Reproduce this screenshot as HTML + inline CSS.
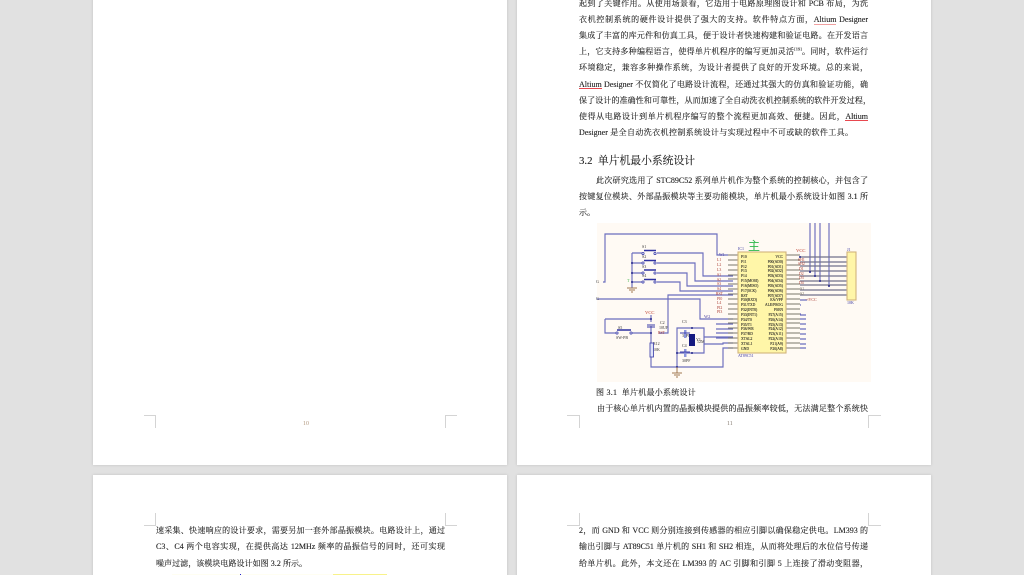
<!DOCTYPE html>
<html lang="zh"><head><meta charset="utf-8"><title>文档</title>
<style>
html,body{margin:0;padding:0;width:1024px;height:575px;overflow:hidden;background:#e1e1e1}
.pg{position:absolute;background:#fff;box-shadow:0 0 3px rgba(0,0,0,.14)}
#all{position:absolute;left:0;top:0;width:1024px;height:575px;overflow:hidden;font-family:"Liberation Serif","Noto Serif CJK SC",serif;color:#1f1f1f;filter:blur(.3px)}
.l{position:absolute;font-size:8px;line-height:12px;height:12px;white-space:nowrap;text-align:justify;text-align-last:justify;-webkit-text-stroke:.12px #1f1f1f}
.r{left:579px;width:289px}
.q{left:156px;width:289px}
.u{background:linear-gradient(#e8484f,#e8484f) 0 100%/100% 1px no-repeat;padding-bottom:.5px}
.w{background:linear-gradient(#f0a0a0,#f0a0a0) 0 100%/100% 1px no-repeat;padding-bottom:.5px}
.m{position:absolute;background:#d4d4d4}
.n{position:absolute;font-size:6px;line-height:8px;color:#8a7f75}
sup{font-size:4.5px;line-height:0}
svg{position:absolute;left:0;top:0}
svg text{font-family:"Liberation Serif",serif}
</style></head><body>
<div id="all">
<div class="pg" style="left:93px;top:-10px;width:414px;height:475px"></div>
<div class="pg" style="left:517px;top:-10px;width:414px;height:475px"></div>
<div class="pg" style="left:93px;top:475px;width:414px;height:120px"></div>
<div class="pg" style="left:517px;top:475px;width:414px;height:120px"></div>

<div class="m" style="left:144px;top:415px;width:12px;height:1px"></div><div class="m" style="left:155px;top:415px;width:1px;height:13px"></div>
<div class="m" style="left:445px;top:415px;width:12px;height:1px"></div><div class="m" style="left:445px;top:415px;width:1px;height:13px"></div>
<div class="m" style="left:567px;top:415px;width:12px;height:1px"></div><div class="m" style="left:579px;top:415px;width:1px;height:13px"></div>
<div class="m" style="left:868px;top:415px;width:13px;height:1px"></div><div class="m" style="left:868px;top:415px;width:1px;height:13px"></div>
<div class="m" style="left:144px;top:525px;width:12px;height:1px"></div><div class="m" style="left:155px;top:513px;width:1px;height:13px"></div>
<div class="m" style="left:445px;top:525px;width:12px;height:1px"></div><div class="m" style="left:445px;top:513px;width:1px;height:13px"></div>
<div class="m" style="left:567px;top:525px;width:12px;height:1px"></div><div class="m" style="left:579px;top:513px;width:1px;height:13px"></div>
<div class="m" style="left:868px;top:525px;width:13px;height:1px"></div><div class="m" style="left:868px;top:513px;width:1px;height:13px"></div>
<div class="n" style="left:303px;top:420px;color:#b39a80">10</div>
<div class="n" style="left:727px;top:420px">11</div>

<div class="l r" style="top:-2px">起到了关键作用。从使用场景看，它适用于电路原理图设计和 PCB 布局，为洗</div>
<div class="l r" style="top:14px">衣机控制系统的硬件设计提供了强大的支持。软件特点方面，<span class="w">Altium</span> Designer</div>
<div class="l r" style="top:30px">集成了丰富的库元件和仿真工具，便于设计者快速构建和验证电路。在开发语言</div>
<div class="l r" style="top:46px">上，它支持多种编程语言，使得单片机程序的编写更加灵活<sup>[19]</sup>。同时，软件运行</div>
<div class="l r" style="top:62px">环境稳定，兼容多种操作系统，为设计者提供了良好的开发环境。总的来说，</div>
<div class="l r" style="top:78.500px"><span class="u">Altium</span> Designer 不仅简化了电路设计流程，还通过其强大的仿真和验证功能，确</div>
<div class="l r" style="top:94.500px;width:292px">保了设计的准确性和可靠性，从而加速了全自动洗衣机控制系统的软件开发过程，</div>
<div class="l r" style="top:110.500px">使得从电路设计到单片机程序编写的整个流程更加高效、便捷。因此，<span class="u">Altium</span></div>
<div class="l r" style="top:126.500px;width:274px">Designer 是全自动洗衣机控制系统设计与实现过程中不可或缺的软件工具。</div>
<div class="l" style="left:579px;top:153.500px;font-size:10.800px;line-height:14px;height:14px;text-align:left;text-align-last:left">3.2&nbsp; 单片机最小系统设计</div>
<div class="l" style="left:596px;width:272px;top:174.500px">此次研究选用了 STC89C52 系列单片机作为整个系统的控制核心，并包含了</div>
<div class="l r" style="top:191px">按键复位模块、外部晶振模块等主要功能模块，单片机最小系统设计如图 3.1 所</div>
<div class="l" style="left:579px;top:207px;text-align-last:left">示。</div>
<div class="l" style="left:596px;top:386.500px;text-align-last:left;letter-spacing:.25px">图 3.1&nbsp; 单片机最小系统设计</div>
<div class="l" style="left:597px;width:271px;top:403px">由于核心单片机内置的晶振模块提供的晶振频率较低，无法满足整个系统快</div>

<div class="l q" style="top:524.500px">速采集、快速响应的设计要求，需要另加一套外部晶振模块。电路设计上，通过</div>
<div class="l q" style="top:541px">C3、C4 两个电容实现，在提供高达 12MHz 频率的晶振信号的同时，还可实现</div>
<div class="l" style="left:156px;top:557.500px;text-align-last:left;letter-spacing:.05px">噪声过滤，该模块电路设计如图 3.2 所示。</div>
<div class="l r" style="top:524.500px">2，而 GND 和 VCC 则分别连接到传感器的相应引脚以确保稳定供电。LM393 的</div>
<div class="l r" style="top:541px">输出引脚与 AT89C51 单片机的 SH1 和 SH2 相连，从而将处理后的水位信号传递</div>
<div class="l r" style="top:557.500px">给单片机。此外，本文还在 LM393 的 AC 引脚和引脚 5 上连接了滑动变阻器，</div>

<svg width="1024" height="575" viewBox="0 0 1024 575">
<rect x="172" y="574" width="172" height="1" fill="#fffef2"/>
<rect x="240" y="574" width="1" height="1" fill="#22c"/>
<rect x="333" y="574" width="54" height="1" fill="#f8f28a"/>

<rect x="597" y="223" width="274" height="159" fill="#fffaf4"/>
<text x="748" y="250" font-size="12" fill="#2fb84a" style="font-family:'Noto Sans CJK SC',sans-serif">主</text>

<g fill="none" stroke="#6a6dbe" stroke-width="1.150">
<path d="M603 282H605V234H717V255H728"/>
<path d="M597 299H700V319H733"/>
<path d="M632 253H642M632 263H642M632 273H642M632 282H642M632 253V288"/>
<path d="M657 253H703V276H733M657 263H695V281H733M657 273H687V286H733M657 282H680V291H733"/>
<path d="M659 333H668V295H733"/>
<path d="M651 315V322M651 326V343M651 357V367H723V348H733"/>
<path d="M605 319H651M605 319V333H617M631 333H651"/>
<path d="M677 328H704V353H677ZM677 328V367"/>
<path d="M704 337H733M704 344H723V343H733"/>
<path d="M716 324H733M716 329H733M716 333H733M716 338H733"/>
<path d="M810 223V272M815 223V276M820 223V281M829 223V286"/>
<path d="M800 257H847M800 262H847M800 266H847M800 271H847M800 276H847M800 281H847M800 285H847M800 290H847M800 295H847" stroke="#72728a"/>
<path d="M800 300H807M800 305H801M800 314H801"/>
<path d="M800 315H806M800 319H806M800 324H806M800 329H806M800 334H806M800 339H806M800 344H806M800 348H806"/>
</g>

<g stroke="#78766a" stroke-width="1">
<path d="M728 255H738M728 260H738M728 265H738M728 270H738M728 275H738M728 279H738M728 284H738M728 289H738M728 294H738M728 299H738M728 304H738M728 309H738M728 314H738M728 319H738M728 323H738M728 328H738M728 333H738M728 338H738M728 343H738M728 348H738"/>
<path d="M786 255H800M786 260H800M786 265H800M786 270H800M786 275H800M786 279H800M786 284H800M786 289H800M786 294H800M786 299H800M786 304H800M786 309H800M786 314H800M786 319H800M786 323H800M786 328H800M786 333H800M786 338H800M786 343H800M786 348H800"/>
</g>
<rect x="738" y="252" width="48" height="101" fill="#fff6a8" stroke="#d2b47c" stroke-width="1.100"/>
<rect x="847" y="252" width="9" height="48" fill="#fff6a8" stroke="#d2b47c" stroke-width="1.100"/>

<g font-size="3.700" fill="#222" stroke="#222" stroke-width=".08">
<text x="741" y="258">P10</text><text x="741" y="263">P11</text><text x="741" y="268">P12</text><text x="741" y="272">P13</text><text x="741" y="277">P14</text>
<text x="741" y="282">P15(MOSI)</text><text x="741" y="287">P16(MISO)</text><text x="741" y="292">P17(SCK)</text><text x="741" y="297">RST</text><text x="741" y="301">P30(RXD)</text>
<text x="741" y="306">P31/TXD</text><text x="741" y="311">P32(INT0)</text><text x="741" y="316">P33(INT1)</text><text x="741" y="321">P34/T0</text><text x="741" y="326">P35/T1</text>
<text x="741" y="330">P36/WR</text><text x="741" y="335">P37/RD</text><text x="741" y="340">XTAL2</text><text x="741" y="345">XTAL1</text><text x="741" y="350">GND</text>
<g text-anchor="end">
<text x="783" y="258">VCC</text><text x="783" y="263">P00(AD0)</text><text x="783" y="268">P01(AD1)</text><text x="783" y="272">P02(AD2)</text><text x="783" y="277">P03(AD3)</text>
<text x="783" y="282">P04(AD4)</text><text x="783" y="287">P05(AD5)</text><text x="783" y="292">P06(AD6)</text><text x="783" y="297">P07(AD7)</text><text x="783" y="301">EA/VPP</text>
<text x="783" y="306">ALE/PROG</text><text x="783" y="311">PSEN</text><text x="783" y="316">P27(A15)</text><text x="783" y="321">P26(A14)</text><text x="783" y="326">P25(A13)</text>
<text x="783" y="330">P24(A12)</text><text x="783" y="335">P23(A11)</text><text x="783" y="340">P22(A10)</text><text x="783" y="345">P21(A9)</text><text x="783" y="350">P20(A8)</text>
</g>
</g>

<g font-size="3.800" fill="#a83a30">
<text x="719" y="256" fill="#4a40a0">W1</text><text x="717" y="261">L1</text><text x="717" y="266">L2</text><text x="717" y="271">L3</text>
<text x="717" y="276">S1</text><text x="717" y="281">S2</text><text x="717" y="285">S3</text><text x="717" y="290">S4</text><text x="716" y="295">RST</text>
<text x="717" y="300">PI0</text><text x="717" y="304">L4</text><text x="717" y="309">PI2</text><text x="717" y="313">PI3</text>
<text x="704" y="318" font-size="4.400" fill="#4a40a0">W2</text>
<text x="798" y="261">SH1</text><text x="798" y="265">SH2</text><text x="799" y="270">D1</text><text x="799" y="275">D2</text><text x="799" y="279">D3</text><text x="799" y="284">D4</text>
<text x="800" y="290" fill="#6a6050">S1</text><text x="800" y="295" fill="#6a6050">S2</text>
<text x="796" y="252" font-size="4.600" fill="#b83020">VCC</text>
<text x="645" y="314" font-size="4.600" fill="#b83020">VCC</text>
<text x="658" y="334">RST</text>
</g>
<g font-size="4" fill="#333">
<text x="738" y="250" fill="#3a38a0">IC1</text>
<text x="738" y="357" fill="#3a38a0">AT89C51</text>
<text x="847" y="251" fill="#3a38a0">J1</text>
<text x="847" y="304" fill="#3a38a0">10K</text>
<text x="805" y="301" fill="#a83a30">⊣VCC</text>
<text x="642" y="248">S1</text><text x="642" y="258">S2</text><text x="642" y="268">S3</text><text x="642" y="277">S4</text>
<text x="618" y="329">S5</text><text x="616" y="339">SW-PB</text>
<text x="660" y="324">C2</text><text x="659" y="329">10UF</text>
<text x="653" y="345">R12</text><text x="653" y="351">10K</text>
<text x="682" y="323">C3</text><text x="682" y="337">30PF</text>
<text x="682" y="347">C4</text><text x="682" y="362">30PF</text>
<text x="696" y="341">Y1</text><text x="697" y="343">12M</text>
<text x="596" y="283">G</text><text x="596" y="300">G</text>
<text x="627" y="282" fill="#3cb54a">T</text>
</g>

<g fill="#fff" stroke="#4a4cb0" stroke-width=".9">
<path d="M644 250.500H656M644 260.500H656M644 270H656M644 279.500H656M617 330H631" fill="none" stroke="#2f31a0" stroke-width="1.400"/>
<circle cx="643" cy="253.500" r="1.100"/><circle cx="655" cy="253.500" r="1.100"/>
<circle cx="643" cy="263" r="1.100"/><circle cx="655" cy="263" r="1.100"/>
<circle cx="643" cy="273" r="1.100"/><circle cx="655" cy="273" r="1.100"/>
<circle cx="643" cy="282" r="1.100"/><circle cx="655" cy="282" r="1.100"/>
<circle cx="617" cy="333" r="1.100"/><circle cx="631" cy="333" r="1.100"/>
<rect x="650" y="343" width="3.500" height="14" fill="#dfe3f8"/>
<rect x="684" y="330" width="2.500" height="8" fill="#8d96dc" stroke="none"/>
<rect x="684" y="349" width="2.500" height="8" fill="#8d96dc" stroke="none"/>
</g>
<rect x="689" y="334" width="6" height="12" fill="#161a80"/>
<path d="M647 325H655M647 327H655M680 333H690M680 352H690" stroke="#3a3ca8" stroke-width="1"/>
<g fill="#23258a">
<circle cx="632" cy="263" r="1"/><circle cx="632" cy="273" r="1"/><circle cx="632" cy="282" r="1"/>
<circle cx="651" cy="319" r="1"/><circle cx="651" cy="333" r="1"/><circle cx="677" cy="353" r="1"/><circle cx="677" cy="367" r="1"/>
<circle cx="692" cy="328" r="1"/><circle cx="692" cy="353" r="1"/><circle cx="810" cy="272" r="1"/><circle cx="815" cy="276" r="1"/><circle cx="820" cy="281" r="1"/><circle cx="829" cy="286" r="1"/><circle cx="800" cy="257" r="1"/>
</g>
<g stroke="#a07850" stroke-width="1" fill="none">
<path d="M627 288H637M629 290H635M631 292H633"/>
<path d="M672 373H682M674 375H680M676 377H678M677 367V373"/>
</g>
</svg>
</div>
</body></html>
